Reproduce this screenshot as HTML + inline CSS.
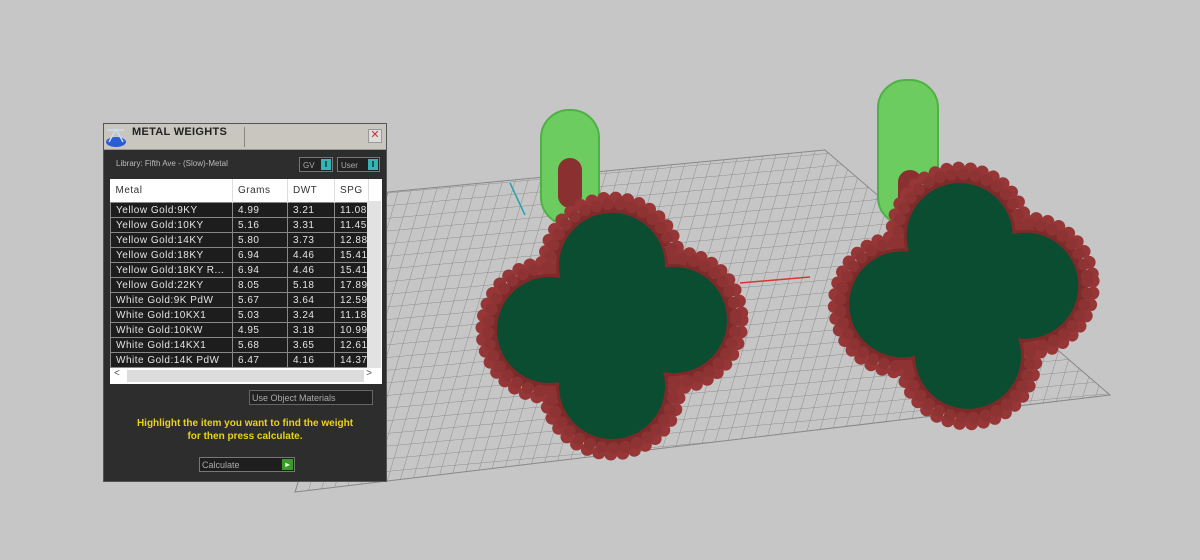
<!DOCTYPE html>
<html><head><meta charset="utf-8"><style>
body{margin:0;width:1200px;height:560px;background:#c6c6c6;position:relative;overflow:hidden;font-family:"Liberation Sans",sans-serif}
svg{position:absolute;left:0;top:0}
.p{position:absolute;left:103px;top:123px;width:284px;height:359px;background:#2d2d2d;border:1px solid #555;box-sizing:border-box}
.tb{position:absolute;left:0;top:0;width:282px;height:25px;background:#c9c6bf;border-bottom:1px solid #999}
.tt{position:absolute;left:28px;top:2px;font-weight:bold;font-size:11px;color:#222;letter-spacing:.3px}
.tb .sep{position:absolute;left:140px;top:3px;width:1px;height:20px;background:#8a8780}
.x{position:absolute;right:4px;top:5px;width:12px;height:12px;border:1px solid #999;color:#c33;font-size:11px;line-height:11px;text-align:center;background:#ddd}
.lib{position:absolute;left:12px;top:35px;font-size:8px;color:#bbb}
.tg{position:absolute;top:33px;height:15px;border:1px solid #777;background:#222;color:#aaa;font-size:8px;line-height:15px;padding-left:3px;box-sizing:border-box}
.tg b{position:absolute;right:1px;top:1px;width:10px;height:11px;background:#33b5b5;color:#111;font-size:8px;line-height:11px;text-align:center}
table{position:absolute;left:6px;top:55px;border-collapse:collapse;font-size:10px;color:#e4e4e4;letter-spacing:.5px;table-layout:fixed}
td{height:14px;padding:0 0 0 5px;border:1px solid #888;background:#1d1d1d;white-space:nowrap;overflow:hidden}
th{height:21px;text-align:left;font-weight:normal;padding-left:5px;background:#fff;color:#333;border-right:1px solid #ddd}
.wa{position:absolute;left:6px;top:55px;width:272px;height:205px;background:#fff}
.vs{position:absolute;left:263px;top:77px;width:14px;height:167px;background:#e2e2e2}
.hs{position:absolute;left:6px;top:244px;width:272px;height:16px;background:#fff}
.hs i{position:absolute;left:17px;top:2px;width:237px;height:12px;background:#dcdcdc}
.uo{position:absolute;left:145px;top:266px;width:124px;height:15px;border:1px solid #666;background:#222;color:#aaa;font-size:9px;line-height:15px;padding-left:2px;box-sizing:border-box}
.msg{position:absolute;left:0;width:282px;top:293px;text-align:center;color:#e8d21a;font-weight:bold;font-size:10px;line-height:13px}
.cb{position:absolute;left:95px;top:333px;width:96px;height:15px;border:1px solid #777;background:#1e1e1e;color:#aaa;font-size:9px;line-height:14px;padding-left:2px;box-sizing:border-box}
.cb b{position:absolute;right:1px;top:1px;width:11px;height:11px;background:#3c9a2a;color:#dfd;font-size:8px;line-height:11px;text-align:center}
</style></head><body>
<svg width="1200" height="560">
<defs>
<pattern id="g" width="13" height="13" patternUnits="userSpaceOnUse" patternTransform="matrix(1 -0.09 -0.3 1 0 0)">
<path d="M0 0H13M0 0V13" stroke="#8a8a8a" stroke-width="1" fill="none"/>
</pattern>
<g id="c0"><circle cx="0" cy="-62" r="56"/><circle cx="62" cy="-8" r="56"/><circle cx="0" cy="58" r="56"/><circle cx="-62" cy="2" r="56"/><rect x="-45" y="-45" width="90" height="90"/></g>
<g id="c1"><circle cx="0" cy="-62" r="62"/><circle cx="62" cy="-8" r="62"/><circle cx="0" cy="58" r="62"/><circle cx="-62" cy="2" r="62"/></g>
<g id="c2"><circle cx="0" cy="-62" r="68"/><circle cx="62" cy="-8" r="68"/><circle cx="0" cy="58" r="68"/><circle cx="-62" cy="2" r="68"/></g>
<g id="c3"><circle cx="0" cy="-62" r="53"/><circle cx="62" cy="-8" r="53"/><circle cx="0" cy="58" r="53"/><circle cx="-62" cy="2" r="53"/><rect x="-45" y="-45" width="90" height="90"/></g>
</defs>
<polygon points="388,192 825,150 1110,395 295,492" fill="url(#g)"/>
<polygon points="388,192 825,150 1110,395 295,492" fill="none" stroke="#888"/>
<line x1="510" y1="183" x2="525" y2="215" stroke="#2aa0b0" stroke-width="1.5"/>
<line x1="740" y1="283" x2="810" y2="277" stroke="#d33" stroke-width="1.5"/>
<rect x="541" y="110" width="58" height="115" rx="28" fill="#6ccc5f" stroke="#4fb045" stroke-width="2"/>
<rect x="558" y="158" width="24" height="50" rx="12" fill="#8a3030"/>
<rect x="878" y="80" width="60" height="145" rx="28" fill="#6ccc5f" stroke="#4fb045" stroke-width="2"/>
<rect x="898" y="170" width="24" height="50" rx="12" fill="#8a3030"/>
<g transform="translate(612,328)">
<use href="#c1" fill="#7d2a2a"/>
<use href="#c2" fill="none" stroke="#963636" stroke-width="13" stroke-dasharray="0 12" stroke-linecap="round"/>
<use href="#c1" fill="none" stroke="#8e3333" stroke-width="12" stroke-dasharray="0 12" stroke-linecap="round"/>
<use href="#c0" fill="#7d2a2a"/>
<use href="#c3" fill="#0a4d30"/>
</g>
<g transform="translate(964,298) rotate(-4)">
<use href="#c1" fill="#7d2a2a"/>
<use href="#c2" fill="none" stroke="#963636" stroke-width="13" stroke-dasharray="0 12" stroke-linecap="round"/>
<use href="#c1" fill="none" stroke="#8e3333" stroke-width="12" stroke-dasharray="0 12" stroke-linecap="round"/>
<use href="#c0" fill="#7d2a2a"/>
<use href="#c3" fill="#0a4d30"/>
</g>
</svg>
<div class="p">
<div class="tb"><svg width="26" height="26" style="left:0;top:0"><ellipse cx="12" cy="18" rx="10" ry="5" fill="#2a5cd8"/><path d="M12 5 L5 18 M12 5 L19 18 M3 6 H20" stroke="#cde" stroke-width="1.5"/></svg><div class="tt">METAL WEIGHTS</div><div class="sep"></div><div class="x">✕</div></div>
<div class="lib">Library: Fifth Ave - (Slow)-Metal</div>
<div class="tg" style="left:195px;width:34px">GV<b>I</b></div>
<div class="tg" style="left:233px;width:43px">User<b>I</b></div>
<div class="wa"></div>
<table>
<colgroup><col style="width:122px"><col style="width:55px"><col style="width:47px"><col style="width:32px"></colgroup>
<tr><th>Metal</th><th>Grams</th><th>DWT</th><th>SPG</th></tr>
<tr><td>Yellow Gold:9KY</td><td>4.99</td><td>3.21</td><td>11.08</td></tr>
<tr><td>Yellow Gold:10KY</td><td>5.16</td><td>3.31</td><td>11.45</td></tr>
<tr><td>Yellow Gold:14KY</td><td>5.80</td><td>3.73</td><td>12.88</td></tr>
<tr><td>Yellow Gold:18KY</td><td>6.94</td><td>4.46</td><td>15.41</td></tr>
<tr><td>Yellow Gold:18KY R...</td><td>6.94</td><td>4.46</td><td>15.41</td></tr>
<tr><td>Yellow Gold:22KY</td><td>8.05</td><td>5.18</td><td>17.89</td></tr>
<tr><td>White Gold:9K PdW</td><td>5.67</td><td>3.64</td><td>12.59</td></tr>
<tr><td>White Gold:10KX1</td><td>5.03</td><td>3.24</td><td>11.18</td></tr>
<tr><td>White Gold:10KW</td><td>4.95</td><td>3.18</td><td>10.99</td></tr>
<tr><td>White Gold:14KX1</td><td>5.68</td><td>3.65</td><td>12.61</td></tr>
<tr><td>White Gold:14K PdW</td><td>6.47</td><td>4.16</td><td>14.37</td></tr>
</table>
<div class="vs"></div>
<div class="hs"><span style="position:absolute;left:4px;top:0;font-size:10px;color:#555">&lt;</span><i></i><span style="position:absolute;right:10px;top:0;font-size:10px;color:#555">&gt;</span></div>
<div class="uo">Use Object Materials</div>
<div class="msg">Highlight the item you want to find the weight<br>for then press calculate.</div>
<div class="cb">Calculate<b>▸</b></div>
</div>
</body></html>
